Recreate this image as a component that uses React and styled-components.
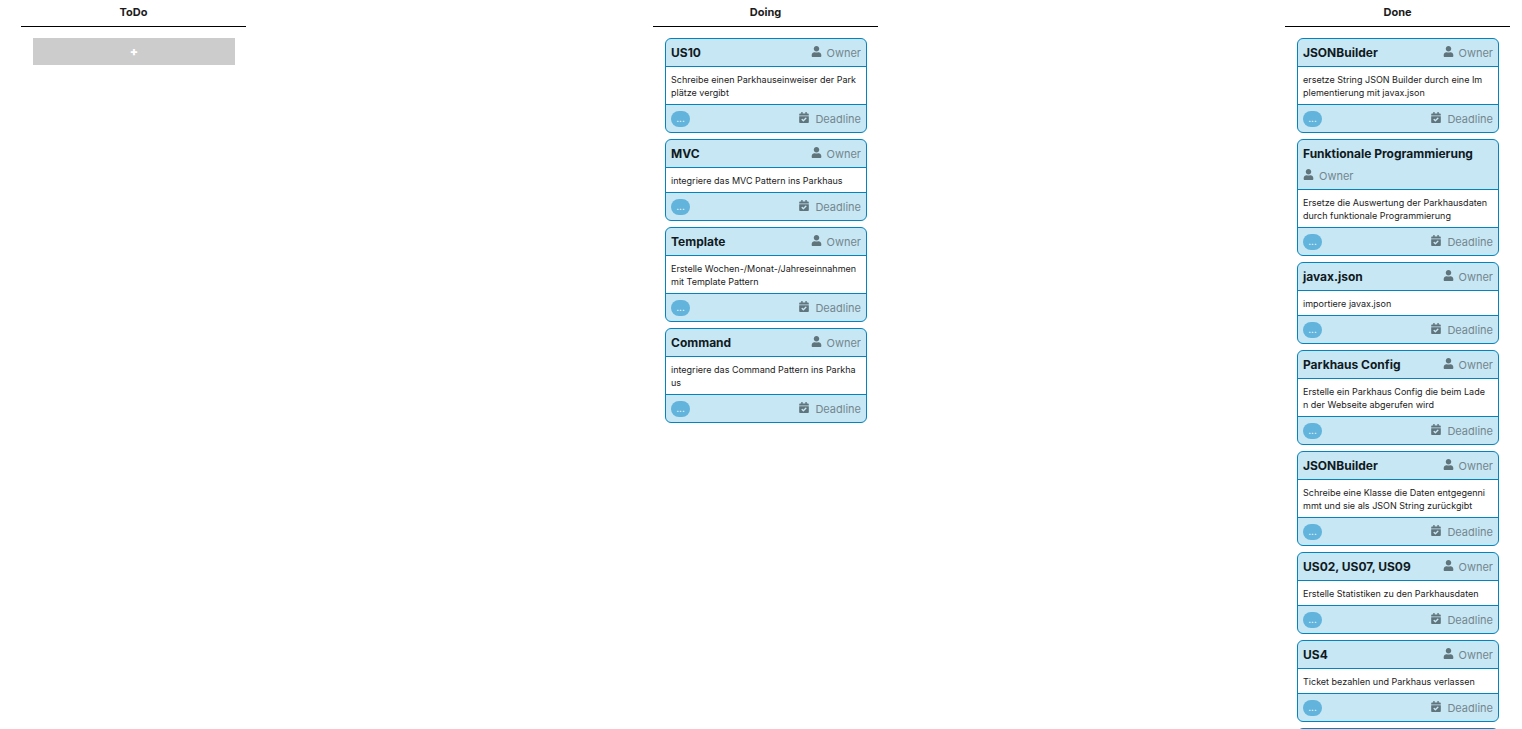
import React from "react";
import styled, { createGlobalStyle } from "styled-components";
import { FaUser, FaCalendarCheck } from "react-icons/fa";

const GlobalStyle = createGlobalStyle`
  * { box-sizing: border-box; }
  body {
    margin: 0;
    background: #fff;
    color: #1b1b1b;
    font-family: Inter, "Liberation Sans", sans-serif;
  }
`;

const Board = styled.main`
  display: flex;
  justify-content: space-between;
  align-items: flex-start;
  height: 100vh;
  padding: 0 12px 0 21px;
  overflow-y: auto;
  scrollbar-width: none;
`;

const Column = styled.section`
  flex: none;
  width: 225px;
`;

const ColumnTitle = styled.h2`
  margin: 0;
  padding: 4px 0 6px;
  border-bottom: 1px solid #000;
  font-size: 11px;
  line-height: 16px;
  font-weight: 700;
  text-align: center;
`;

const CardList = styled.div`
  display: flex;
  flex-direction: column;
  gap: 6px;
  padding: 11px 11px 11px 12px;
`;

const AddButton = styled.button`
  height: 27px;
  padding: 0;
  border: 0;
  background: #ccc;
  color: #fff;
  font: 900 12px/27px Inter, "Liberation Sans", sans-serif;
  cursor: pointer;
`;

const CardBox = styled.article`
  min-height: 82px;
  overflow: hidden;
  border: 1px solid #0284be;
  border-radius: 6px;
  background: #c7e7f4;
`;

const CardHeader = styled.header`
  display: flex;
  flex-wrap: wrap;
  justify-content: space-between;
  align-items: center;
  row-gap: 1px;
  padding: 3px 5px;
`;

const CardTitle = styled.h3`
  margin: 0;
  color: #111a1e;
  font-size: 12px;
  line-height: 21px;
  font-weight: 700;
  white-space: nowrap;
`;

const Description = styled.p`
  margin: 0;
  padding: 6px 5px 5px;
  border: solid #0284be;
  border-width: 1px 0;
  background: #fff;
  font-size: 9px;
  line-height: 13px;
  white-space: pre;
`;

const CardFooter = styled.footer`
  display: flex;
  justify-content: space-between;
  align-items: center;
  padding: 3px 5px;
`;

const Meta = styled.span`
  display: flex;
  align-items: center;
  gap: 5px;
  padding-top: 2px;
  color: #74868e;
  font-size: 11px;
  line-height: 19px;

  svg {
    height: 11px;
    margin-bottom: 5px;
    color: #60747c;
  }
`;

const MoreButton = styled.button`
  width: 19px;
  height: 16px;
  padding: 0 0 2px;
  border: 0;
  border-radius: 8px;
  background: #62b4dc;
  color: #fff;
  font: 400 10px/14px Inter, "Liberation Sans", sans-serif;
  cursor: pointer;
`;

const columns = [
  { title: "ToDo", canAdd: true, cards: [] },
  {
    title: "Doing",
    cards: [
      ["US10", "Schreibe einen Parkhauseinweiser der Park\nplätze vergibt"],
      ["MVC", "integriere das MVC Pattern ins Parkhaus"],
      ["Template", "Erstelle Wochen-/Monat-/Jahreseinnahmen\nmit Template Pattern"],
      ["Command", "integriere das Command Pattern ins Parkha\nus"],
    ],
  },
  {
    title: "Done",
    hasMore: true,
    cards: [
      ["JSONBuilder", "ersetze String JSON Builder durch eine Im\nplementierung mit javax.json"],
      ["Funktionale Programmierung", "Ersetze die Auswertung der Parkhausdaten\ndurch funktionale Programmierung"],
      ["javax.json", "importiere javax.json"],
      ["Parkhaus Config", "Erstelle ein Parkhaus Config die beim Lade\nn der Webseite abgerufen wird"],
      ["JSONBuilder", "Schreibe eine Klasse die Daten entgegenni\nmmt und sie als JSON String zurückgibt"],
      ["US02, US07, US09", "Erstelle Statistiken zu den Parkhausdaten"],
      ["US4", "Ticket bezahlen und Parkhaus verlassen"],
    ],
  },
];

function Card({ title, text }) {
  return (
    <CardBox>
      <CardHeader>
        <CardTitle>{title}</CardTitle>
        <Meta><FaUser size={11} />Owner</Meta>
      </CardHeader>
      <Description>{text}</Description>
      <CardFooter>
        <MoreButton type="button">...</MoreButton>
        <Meta><FaCalendarCheck size={12} />Deadline</Meta>
      </CardFooter>
    </CardBox>
  );
}

export default function App() {
  return (
    <>
      <GlobalStyle />
      <Board>
        {columns.map((column) => (
          <Column key={column.title}>
            <ColumnTitle>{column.title}</ColumnTitle>
            <CardList>
              {column.canAdd && <AddButton type="button">+</AddButton>}
              {column.cards.map(([title, text], index) => (
                <Card key={index} title={title} text={text} />
              ))}
              {column.hasMore && <CardBox />}
            </CardList>
          </Column>
        ))}
      </Board>
    </>
  );
}
